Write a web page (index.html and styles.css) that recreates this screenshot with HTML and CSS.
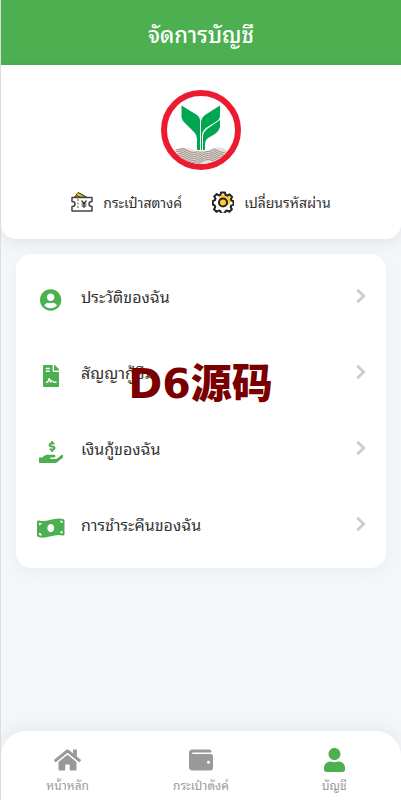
FILE: index.html
```
<!DOCTYPE html>
<html lang="th">
<head>
    <meta charset="utf-8">
    <meta name="viewport" content="width=device-width, initial-scale=1">
    <title>จัดการบัญชี</title>
    <link rel="stylesheet" href="styles.css">
</head>
<body>
<header class="topbar">
    <h1>จัดการบัญชี</h1>
</header>

<main>
    <section class="profile">
        <svg class="logo" viewBox="0 0 80 80" aria-hidden="true">
            <defs>
                <clipPath id="water">
                    <path d="M14 60C21 56 28 58 33 60S45 62 51 59s10-2 15 1L60 68Q40 80 20 68z"/>
                </clipPath>
            </defs>
            <circle cx="40" cy="40" r="37" fill="#fff" stroke="#ed1b2f" stroke-width="6"/>
            <g fill="#00a651">
                <path d="M20.500 15.500L36 25Q39 27 39 31V60H36V49Q36 45 33 42L24 33Q20.500 30 20.500 26z"/>
                <path d="M59 15.500L44 25Q40 28 40 33V60H41V46Q41 41 45 38L56 31Q59 29 59 25z"/>
                <path d="M59 30V37Q58 41 54 44L47 48Q44 50 44 55V60H42V47Q42 42 46 39z"/>
            </g>
            <g clip-path="url(#water)">
                <path d="M10 54h60v25H10z" fill="#e6e0dc"/>
                <g fill="none" stroke="#9b8b82" stroke-width="1">
                    <path d="M10 60q7-5 15 0t15 0 15 0 15 0M10 62q7-5 15 0t15 0 15 0 15 0M10 64q7-5 15 0t15 0 15 0 15 0M10 66q7-5 15 0t15 0 15 0 15 0M10 68q7-5 15 0t15 0 15 0 15 0M10 70q7-5 15 0t15 0 15 0 15 0M10 72q7-5 15 0t15 0 15 0 15 0"/>
                </g>
            </g>
        </svg>
        <div class="shortcuts">
            <a href="#wallet">
                <svg viewBox="0 0 22 22" aria-hidden="true">
                    <path d="M3.500 6L7 1.500 15.500 6z" fill="#f0d51c" stroke="#554c16"/>
                    <path d="M7 1.500l8 4.500M5 4l4 2" stroke="#554c16" fill="none"/>
                    <path d="M1 6.500h20v4q-3 0-3 2.500t3 2.500v4.500H1v-4.500q3 0 3-2.500t-3-2.500z" fill="#fff" stroke="#444" stroke-width="1.500" stroke-linejoin="round"/>
                    <path d="M7 8v10" stroke="#555" stroke-dasharray="2 1.500"/>
                    <path d="M10.500 9.500l2.500 3 2.500-3M13 12.500V17M10.500 13h5M10.500 15h5" stroke="#333" stroke-width="1.200" fill="none"/>
                </svg>
                <span>กระเป๋าสตางค์</span>
            </a>
            <a href="#password">
                <svg viewBox="0 0 22 22" aria-hidden="true">
                    <circle cx="13" cy="9" r="6" fill="#ffcd2e"/>
                    <path d="M9 1.500h4l.6 2.400 1.800.8 2.200-1.300 2.500 2.500-1.200 2.300.6 1.400 2 .6v3.600l-2.200.6-.7 1.700 1.300 2.200-2.600 2.500-2.200-1.300-1.600.7-.6 2.300H9l-.6-2.300-1.600-.7-2.300 1.300-2.500-2.500 1.300-2.200-.7-1.700L.8 13.500V9.900l2-.6.7-1.500L2.200 5.500l2.600-2.400L7 4.500l1.500-.6z" fill="none" stroke="#222" stroke-width="2" stroke-linejoin="round"/>
                    <circle cx="11" cy="11.500" r="4" fill="#ffcd2e" stroke="#222" stroke-width="2"/>
                </svg>
                <span>เปลี่ยนรหัสผ่าน</span>
            </a>
        </div>
    </section>

    <nav class="menu">
        <a href="#profile">
            <span class="icon"><svg viewBox="0 0 496 512"><path d="M248 8C111 8 0 119 0 256s111 248 248 248 248-111 248-248S385 8 248 8zm0 96c48.600 0 88 39.400 88 88s-39.400 88-88 88-88-39.400-88-88 39.400-88 88-88zm0 344c-58.700 0-111.300-26.600-146.500-68.200 18.800-35.400 55.600-59.800 98.500-59.800 2.400 0 4.800.4 7.100 1.100 13 4.200 26.600 6.900 40.900 6.900 14.300 0 28-2.700 40.900-6.900 2.300-.7 4.700-1.100 7.100-1.100 42.900 0 79.700 24.400 98.500 59.800C359.300 421.400 306.700 448 248 448z"/></svg></span>
            <span class="label">ประวัติของฉัน</span>
            <svg class="chevron" viewBox="0 0 320 512"><path d="M285.476 272.971L91.132 467.314c-9.373 9.373-24.569 9.373-33.941 0l-22.667-22.667c-9.357-9.357-9.375-24.522-.04-33.901L188.505 256 34.484 101.255c-9.335-9.379-9.317-24.544.04-33.901l22.667-22.667c9.373-9.373 24.569-9.373 33.941 0L285.475 239.030c9.373 9.372 9.373 24.568.001 33.941z"/></svg>
        </a>
        <a href="#contract">
            <span class="icon"><svg viewBox="0 0 384 512"><path d="M224 136V0H24C10.700 0 0 10.700 0 24v464c0 13.300 10.700 24 24 24h336c13.300 0 24-10.700 24-24V160H248c-13.200 0-24-10.800-24-24zM64 72c0-4.420 3.580-8 8-8h80c4.420 0 8 3.580 8 8v16c0 4.420-3.580 8-8 8H72c-4.420 0-8-3.580-8-8V72zm0 64c0-4.420 3.580-8 8-8h80c4.420 0 8 3.580 8 8v16c0 4.420-3.580 8-8 8H72c-4.420 0-8-3.580-8-8v-16zm192.810 248H304c8.840 0 16 7.160 16 16s-7.160 16-16 16h-47.190c-16.450 0-31.270-9.140-38.640-23.860-2.950-5.920-8.090-6.520-10.170-6.520s-7.220.59-10.020 6.190l-7.670 15.340a15.986 15.986 0 0 1-14.310 8.840c-.38 0-.75-.02-1.140-.05-6.450-.45-12-4.750-14.030-10.890L144 354.590l-10.610 31.880c-5.890 17.660-22.380 29.530-41 29.530H80c-8.840 0-16-7.160-16-16s7.160-16 16-16h12.390c4.830 0 9.110-3.080 10.640-7.660l18.190-54.640c3.300-9.810 12.440-16.410 22.780-16.410s19.480 6.590 22.770 16.410l13.880 41.640c19.770-16.190 54.050-9.700 66 14.160 2.020 4.060 5.960 6.500 10.160 6.500zM377 105L279.100 7c-4.500-4.500-10.600-7-17-7H256v128h128v-6.100c0-6.300-2.500-12.400-7-16.900z"/></svg></span>
            <span class="label">สัญญากู้ยืม</span>
            <svg class="chevron" viewBox="0 0 320 512"><path d="M285.476 272.971L91.132 467.314c-9.373 9.373-24.569 9.373-33.941 0l-22.667-22.667c-9.357-9.357-9.375-24.522-.04-33.901L188.505 256 34.484 101.255c-9.335-9.379-9.317-24.544.04-33.901l22.667-22.667c9.373-9.373 24.569-9.373 33.941 0L285.475 239.030c9.373 9.372 9.373 24.568.001 33.941z"/></svg>
        </a>
        <a href="#loans">
            <span class="icon"><svg viewBox="0 0 576 512"><path d="M271.060,144.300l54.270,14.300a8.590,8.590,0,0,1,6.630,8.100c0,4.600-4.090,8.400-9.120,8.400h-35.600a30,30,0,0,1-11.190-2.200c-5.240-2.200-11.280-1.700-15.300,2l-19,17.500a11.680,11.680,0,0,0-2.250,2.660,11.420,11.420,0,0,0,3.880,15.740,83.770,83.770,0,0,0,34.510,11.500V240c0,8.800,7.830,16,17.370,16h17.370c9.550,0,17.380-7.200,17.380-16V222.400c32.930-3.600,57.840-31,53.500-63-3.150-23-22.460-41.300-46.560-47.700L282.680,97.400a8.590,8.590,0,0,1-6.630-8.100c0-4.600,4.090-8.400,9.120-8.400h35.600A30,30,0,0,1,332,83.100c5.230,2.200,11.280,1.700,15.300-2l19-17.500A11.310,11.310,0,0,0,368.470,61a11.430,11.430,0,0,0-3.840-15.780,83.820,83.820,0,0,0-34.520-11.500V16c0-8.800-7.820-16-17.370-16H295.370C285.820,0,278,7.200,278,16V33.600c-32.890,3.600-57.850,31-53.510,63C227.630,119.600,247,137.900,271.060,144.300Z"/><path d="M565.300 328.100c-11.800-10.700-30.200-10-42.600 0L430.300 402c-11.300 9.100-25.400 14-40 14H272c-8.800 0-16-7.200-16-16s7.200-16 16-16h78.300c15.900 0 30.700-10.900 33.300-26.600 3.300-20-12.100-37.400-31.600-37.400H192c-27 0-53.100 9.300-74.100 26.300L71.400 384H16c-8.800 0-16 7.200-16 16v96c0 8.800 7.200 16 16 16h356.800c14.500 0 28.600-4.900 40-14L564 377c15.200-12.100 16.400-35.300 1.300-48.900z"/></svg></span>
            <span class="label">เงินกู้ของฉัน</span>
            <svg class="chevron" viewBox="0 0 320 512"><path d="M285.476 272.971L91.132 467.314c-9.373 9.373-24.569 9.373-33.941 0l-22.667-22.667c-9.357-9.357-9.375-24.522-.04-33.901L188.505 256 34.484 101.255c-9.335-9.379-9.317-24.544.04-33.901l22.667-22.667c9.373-9.373 24.569-9.373 33.941 0L285.475 239.030c9.373 9.372 9.373 24.568.001 33.941z"/></svg>
        </a>
        <a href="#repayments">
            <span class="icon"><svg viewBox="0 0 640 512"><path d="M621.160 54.460C582.370 38.190 543.550 32 504.750 32c-123.170-.01-246.330 62.340-369.500 62.340-30.890 0-61.760-3.920-92.650-13.720-3.470-1.100-6.950-1.620-10.350-1.620C15.040 79 0 92.320 0 110.810v317.260c0 12.630 7.230 24.600 18.840 29.460C57.630 473.810 96.450 480 135.250 480c123.170 0 246.340-62.350 369.510-62.350 30.890 0 61.760 3.920 92.650 13.720 3.470 1.100 6.950 1.620 10.350 1.620 17.210 0 32.250-13.320 32.250-31.810V83.930c-.01-12.640-7.240-24.600-18.850-29.470zM48 132.220c20.120 5.040 41.120 7.570 62.720 8.930C104.840 170.540 79 192.690 48 192.690v-60.470zm0 285v-47.780c34.370 0 62.180 27.270 63.710 61.400-22.530-1.810-43.590-6.310-63.710-13.620zM320 352c-44.190 0-80-42.990-80-96 0-53.020 35.820-96 80-96s80 42.980 80 96c0 53.030-35.830 96-80 96zm272 27.780c-17.520-4.390-35.710-6.850-54.320-8.440 5.870-26.080 27.500-45.880 54.320-49.280v57.720zm0-236.110c-30.890-3.910-54.860-29.700-55.810-61.550 19.540 2.170 38.090 6.230 55.810 12.660v48.890z"/></svg></span>
            <span class="label">การชำระคืนของฉัน</span>
            <svg class="chevron" viewBox="0 0 320 512"><path d="M285.476 272.971L91.132 467.314c-9.373 9.373-24.569 9.373-33.941 0l-22.667-22.667c-9.357-9.357-9.375-24.522-.04-33.901L188.505 256 34.484 101.255c-9.335-9.379-9.317-24.544.04-33.901l22.667-22.667c9.373-9.373 24.569-9.373 33.941 0L285.475 239.030c9.373 9.372 9.373 24.568.001 33.941z"/></svg>
        </a>
    </nav>
</main>

<nav class="tabbar">
    <a href="#home">
        <svg viewBox="0 0 576 512"><path d="M280.370 148.260L96 300.110V464a16 16 0 0 0 16 16l112.060-.29a16 16 0 0 0 15.920-16V368a16 16 0 0 1 16-16h64a16 16 0 0 1 16 16v95.640a16 16 0 0 0 16 16.050L464 480a16 16 0 0 0 16-16V300L295.670 148.260a12.190 12.190 0 0 0-15.300 0zM571.600 251.470L488 182.560V44.050a12 12 0 0 0-12-12h-56a12 12 0 0 0-12 12v72.610L318.470 43a48 48 0 0 0-61 0L4.340 251.470a12 12 0 0 0-1.600 16.900l25.500 31A12 12 0 0 0 45.150 301l235.220-193.740a12.190 12.190 0 0 1 15.300 0L530.900 301a12 12 0 0 0 16.900-1.600l25.500-31a12 12 0 0 0-1.700-16.930z"/></svg>
        <span>หน้าหลัก</span>
    </a>
    <a href="#wallet">
        <svg viewBox="0 0 512 512"><path d="M461.200 128H80c-8.840 0-16-7.160-16-16s7.160-16 16-16h384c8.840 0 16-7.160 16-16 0-26.510-21.490-48-48-48H64C28.650 32 0 60.650 0 96v320c0 35.350 28.650 64 64 64h397.200c28.020 0 50.800-21.530 50.800-48V176c0-26.470-22.780-48-50.800-48zM416 336c-17.670 0-32-14.330-32-32s14.330-32 32-32 32 14.330 32 32-14.330 32-32 32z"/></svg>
        <span>กระเป๋าตังค์</span>
    </a>
    <a href="#account" class="active">
        <svg viewBox="0 0 448 512"><path d="M224 256c70.700 0 128-57.300 128-128S294.700 0 224 0 96 57.300 96 128s57.300 128 128 128zm89.600 32h-16.700c-22.200 10.200-46.900 16-72.900 16s-50.600-5.800-72.900-16h-16.700C60.200 288 0 348.200 0 422.400V464c0 26.500 21.500 48 48 48h352c26.500 0 48-21.500 48-48v-41.600c0-74.200-60.200-134.400-134.400-134.400z"/></svg>
        <span>บัญชี</span>
    </a>
</nav>

<div class="watermark">D6源码</div>
</body>
</html>
```
FILE: styles.css
```
* {
    box-sizing: border-box;
}

body {
    margin: 0;
    min-height: 100vh;
    display: flex;
    flex-direction: column;
    border-left: 1px solid #dcdce4;
    background: #f3f7fa;
    color: #333;
    font-family: Tahoma, "Noto Sans Thai Looped", Loma, "Noto Sans", sans-serif;
}

a {
    color: inherit;
    text-decoration: none;
}

main {
    flex: 1;
}

.topbar {
    height: 65px;
    display: flex;
    align-items: center;
    justify-content: center;
    background: #4caf50;
    color: #fff;
}

.topbar h1 {
    margin: 0;
    font-size: 22px;
    line-height: 30px;
    font-weight: 500;
}

/* logo and shortcuts */
.profile {
    display: flex;
    flex-direction: column;
    align-items: center;
    gap: 20px;
    padding: 25px 15px;
    background: #fff;
    border-radius: 0 0 15px 15px;
    box-shadow: 0 4px 15px rgba(0, 0, 0, 0.08);
}

.logo {
    width: 80px;
    height: 80px;
}

.shortcuts {
    display: flex;
    gap: 30px;
    font-size: 14px;
    line-height: 24px;
}

.shortcuts a {
    display: flex;
    align-items: center;
    gap: 10px;
}

.shortcuts svg {
    width: 22px;
    height: 22px;
}

/* menu card */
.menu {
    margin: 15px;
    padding: 4px 20px 6px;
    background: #fff;
    border-radius: 15px;
    box-shadow: 0 4px 15px rgba(0, 0, 0, 0.04);
}

.menu a {
    display: flex;
    align-items: center;
    height: 76px;
    font-size: 16px;
    line-height: 24px;
}

.icon {
    width: 30px;
    margin-right: 15px;
    padding-top: 8px;
    display: flex;
    justify-content: center;
}

.icon svg {
    height: 22px;
    fill: #4caf50;
}

.label {
    flex: 1;
}

.chevron {
    height: 16px;
    fill: #ccc;
    stroke: #ccc;
    stroke-width: 16px;
}

/* bottom tabs */
.tabbar {
    display: flex;
    padding: 17px 0 6px;
    background: #fff;
    border-radius: 25px 25px 0 0;
    box-shadow: 0 -4px 15px rgba(0, 0, 0, 0.06);
    color: #999;
    font-size: 12px;
    line-height: 18px;
}

.tabbar a {
    flex: 1;
    display: flex;
    flex-direction: column;
    align-items: center;
    gap: 4px;
}

.tabbar svg {
    height: 24px;
    fill: #999;
}

.tabbar .active svg {
    fill: #4caf50;
}

.watermark {
    position: absolute;
    top: 360px;
    left: 0;
    right: 0;
    text-align: center;
    color: #7a0000;
    font-family: "DejaVu Sans", "Noto Sans CJK SC", sans-serif;
    font-size: 41px;
    line-height: 48px;
    font-weight: 900;
    pointer-events: none;
}
```
